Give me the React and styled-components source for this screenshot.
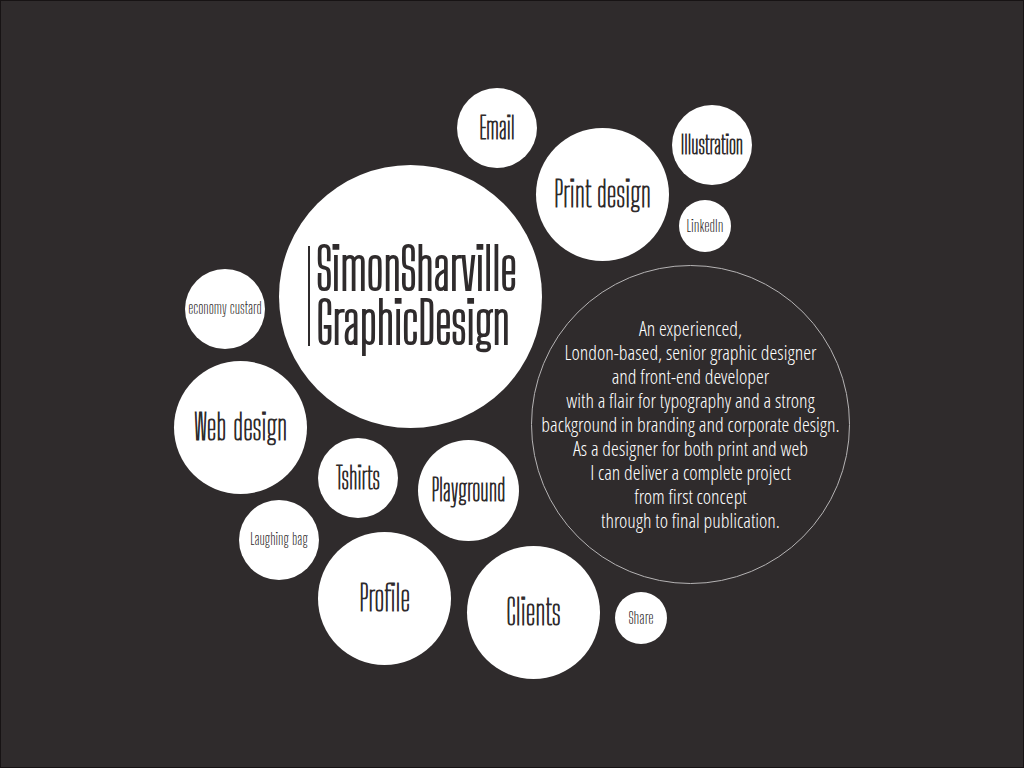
import React from "react";
import styled, { createGlobalStyle } from "styled-components";

const ink = "#2f2b2c";
const paper = "#ffffff";
const displayFont = `"Big Shoulders Display", Oswald, "Liberation Sans", sans-serif`;
const textFont = `"Open Sans Condensed Light", "Roboto Condensed", "Liberation Sans", sans-serif`;

const GlobalStyle = createGlobalStyle`
  *, *::before, *::after { box-sizing: border-box; }
  body {
    margin: 0;
    background: ${ink};
    color: ${ink};
    font-family: ${textFont};
  }
`;

const Page = styled.main`
  display: flex;
  align-items: center;
  justify-content: center;
  min-height: 100vh;
  border: 1px solid #171314;
`;

/* The free canvas on which the bubbles float. */
const Cluster = styled.div`
  position: relative;
  flex: none;
  width: 676px;
  height: 592px;
`;

const Bubble = styled.div`
  position: absolute;
  left: ${({ $x }) => $x}px;
  top: ${({ $y }) => $y}px;
  width: ${({ $size }) => $size}px;
  height: ${({ $size }) => $size}px;
  display: flex;
  align-items: center;
  justify-content: center;
  border-radius: 50%;
  background: ${paper};
`;

const LinkBubble = styled(Bubble)`
  padding-bottom: 2px;
  color: ${ink};
  font-family: ${displayFont};
  font-size: ${({ $text }) => $text}px;
  font-weight: ${({ $text }) => ($text > 20 ? 100 : 300)};
  line-height: 1;
  white-space: nowrap;
  text-decoration: none;
  -webkit-text-stroke: ${({ $text }) => ($text > 20 ? 1 : 0)}px ${ink};
`;

const Logo = styled.h1`
  display: flex;
  align-items: center;
  gap: 6px;
  margin: 0;
  padding: 0 0 2px 4px;
  font-family: ${displayFont};
  font-size: 56px;
  font-weight: 200;
  line-height: 54px;
  white-space: nowrap;
  -webkit-text-stroke: 2px ${ink};
`;

const LogoRule = styled.span`
  width: 2px;
  height: 100px;
  background: ${ink};
`;

const LogoLine = styled.span`
  display: block;
`;

const IntroBubble = styled(Bubble)`
  border: 1px solid #b5b3b4;
  background: none;
`;

const Intro = styled.p`
  margin: 0;
  color: ${paper};
  font-size: 20px;
  line-height: 24px;
  text-align: center;
  white-space: nowrap;
`;

const links = [
  { label: "Email", x: 283, y: 0, size: 80, text: 29 },
  { label: "Print design", x: 362, y: 40, size: 133, text: 35 },
  { label: "Illustration", x: 498, y: 17, size: 80, text: 25 },
  { label: "LinkedIn", x: 505, y: 112, size: 52, text: 17 },
  { label: "economy custard", x: 11, y: 181, size: 80, text: 16 },
  { label: "Web design", x: 0, y: 273, size: 133, text: 35 },
  { label: "Tshirts", x: 144, y: 350, size: 80, text: 29 },
  { label: "Playground", x: 244, y: 352, size: 101, text: 29 },
  { label: "Laughing bag", x: 65, y: 412, size: 80, text: 16 },
  { label: "Profile", x: 144, y: 444, size: 133, text: 35 },
  { label: "Clients", x: 293, y: 458, size: 133, text: 35 },
  { label: "Share", x: 441, y: 504, size: 52, text: 17 },
];

const introLines = [
  "An experienced,",
  "London-based, senior graphic designer",
  "and front-end developer",
  "with a flair for typography and a strong",
  "background in branding and corporate design.",
  "As a designer for both print and web",
  "I can deliver a complete project",
  "from first concept",
  "through to final publication.",
];

export default function App() {
  return (
    <>
      <GlobalStyle />
      <Page>
        <Cluster>
          <Bubble $x={105} $y={77} $size={263}>
            <Logo>
              <LogoRule />
              <span>
                <LogoLine>SimonSharville</LogoLine>
                <LogoLine>GraphicDesign</LogoLine>
              </span>
            </Logo>
          </Bubble>
          {links.map(({ label, x, y, size, text }) => (
            <LinkBubble as="a" href="#" key={label} $x={x} $y={y} $size={size} $text={text}>
              {label}
            </LinkBubble>
          ))}
          <IntroBubble $x={357} $y={177} $size={319}>
            <Intro>
              {introLines.map((line) => (
                <React.Fragment key={line}>
                  {line}
                  <br />
                </React.Fragment>
              ))}
            </Intro>
          </IntroBubble>
        </Cluster>
      </Page>
    </>
  );
}
